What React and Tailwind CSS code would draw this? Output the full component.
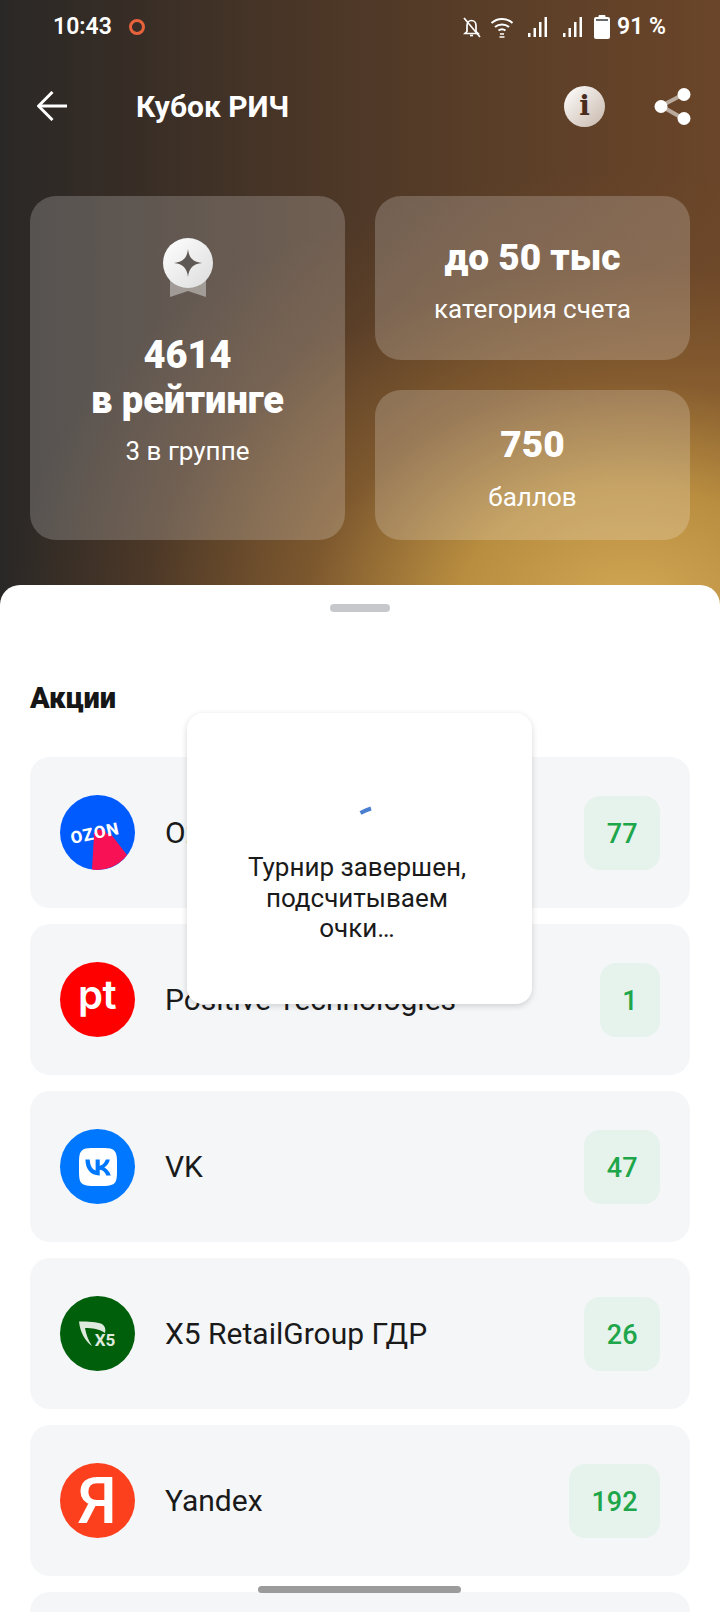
import React from "react";
import { SiVk } from "react-icons/si";

const stocks = [
  { name: "Ozon", score: 77, logo: "ozon" },
  { name: "Positive Technologies", score: 1, logo: "pt" },
  { name: "VK", score: 47, logo: "vk" },
  { name: "X5 RetailGroup ГДР", score: 26, logo: "x5" },
  { name: "Yandex", score: 192, logo: "yandex" },
];

const OzonLogo = () => (
  <svg viewBox="0 0 75 75" className="w-[75px] h-[75px]">
    <circle cx="37.5" cy="37.5" r="37.5" fill="#005bff" />
    <path d="M34 41 L50 38 L67 60 A37.5 37.5 0 0 1 32 74.6 Z" fill="#f91155" />
    <ellipse cx="40" cy="39" rx="6.5" ry="4.5" fill="#f91155" transform="rotate(-12 40 39)" />
    <text x="35" y="44" textAnchor="middle" fontSize="17" fontWeight="800" fill="#fff" letterSpacing="1" transform="rotate(-12 35 38)" fontFamily="Roboto, sans-serif">
      OZON
    </text>
  </svg>
);

const PtLogo = () => (
  <svg viewBox="0 0 75 75" className="w-[75px] h-[75px]">
    <circle cx="37.5" cy="37.5" r="37.5" fill="#ff0000" />
    <text x="37" y="47" textAnchor="middle" fontSize="40" fontWeight="600" fill="#fff" letterSpacing="-0.5" fontFamily="Inter, sans-serif">
      pt
    </text>
  </svg>
);

const VkLogo = () => (
  <div className="w-[75px] h-[75px] rounded-full bg-[#0077ff] flex items-center justify-center">
    <SiVk size={38} color="#ffffff" />
  </div>
);

const X5Logo = () => (
  <svg viewBox="0 0 75 75" className="w-[75px] h-[75px]">
    <circle cx="37.5" cy="37.5" r="37.5" fill="#005f0b" />
    <path d="M19 25.5 C28 25.5 37 26 42 28 C45 30 46 33 45 37 C40 33 32 32 25 32 C26 38 28 44 32 50 C25 45 20 36 19 25.5 Z" fill="#dfeadf" />
    <text x="45" y="50" textAnchor="middle" fontSize="17" fontWeight="700" fill="#dfeadf" fontFamily="Roboto, sans-serif">
      X5
    </text>
  </svg>
);

const YandexLogo = () => (
  <svg viewBox="0 0 75 75" className="w-[75px] h-[75px]">
    <circle cx="37.5" cy="37.5" r="37.5" fill="#fc3f1d" />
    <text x="37" y="60" textAnchor="middle" fontSize="64" fontWeight="500" fill="#fff" fontFamily="Roboto, sans-serif">
      Я
    </text>
  </svg>
);

const logos = { ozon: OzonLogo, pt: PtLogo, vk: VkLogo, x5: X5Logo, yandex: YandexLogo };

const StockRow = ({ stock }) => {
  const Logo = logos[stock.logo];
  return (
    <div className="h-[151px] rounded-[20px] bg-[#f4f6f8] pl-[30px] pr-[30px] flex items-center">
      <Logo />
      <span className="ml-[30px] flex-1 text-[30px] leading-[38px] text-[#1a1a1a]">{stock.name}</span>
      <span className="h-[74px] px-[22.5px] pt-[3px] rounded-[16px] bg-[#e6f2ec] flex items-center text-[27px] font-medium text-[#1ea64a]">
        {stock.score}
      </span>
    </div>
  );
};

const StatusIcons = () => (
  <div className="flex items-center">
    <svg viewBox="0 0 22 22" className="w-[22px] h-[22px]" fill="none" stroke="#fff" strokeWidth="1.7">
      <path d="M6 15.5V9.5C6 6.5 8 4.5 10.5 4.5S15 6.5 15 9.5V15.5L17 17.5H4Z" />
      <path d="M9 19.5H12" />
      <path d="M3 2L19 21" />
    </svg>
    <svg viewBox="0 0 24 22" className="ml-[7px] w-[24px] h-[22px]" fill="none" stroke="#fff" strokeWidth="2">
      <path d="M1.5 7C7.5 1.5 16.5 1.5 22.5 7" />
      <path d="M5 11C9 7.5 15 7.5 19 11" />
      <path d="M8.5 14.5C10.5 13 13.5 13 15.5 14.5" />
      <path d="M10 18H14M9.5 21H14.5" strokeWidth="1.5" />
    </svg>
    <svg viewBox="0 0 20 22" className="ml-[14px] w-[20px] h-[22px]" fill="#fff">
      <rect x="0" y="17" width="2.5" height="4" />
      <rect x="5.5" y="12" width="2.5" height="9" />
      <rect x="11" y="6" width="2.5" height="15" />
      <rect x="16.5" y="1" width="2.5" height="20" />
    </svg>
    <svg viewBox="0 0 20 22" className="ml-[15px] w-[20px] h-[22px]" fill="#fff">
      <rect x="0" y="17" width="2.5" height="4" />
      <rect x="5.5" y="12" width="2.5" height="9" />
      <rect x="11" y="6" width="2.5" height="15" />
      <rect x="16.5" y="1" width="2.5" height="20" />
    </svg>
    <svg viewBox="0 0 16 24" className="ml-[11px] w-[16px] h-[24px]" fill="#fff">
      <rect x="4.5" y="0" width="7" height="3" rx="1" />
      <path d="M2 2H14A2 2 0 0 1 16 4V22A2 2 0 0 1 14 24H2A2 2 0 0 1 0 22V4A2 2 0 0 1 2 2Z" />
      <rect x="2" y="4" width="12" height="2" fill="#6b6b6b" />
    </svg>
    <span className="ml-[7px] text-[23px] font-semibold text-white">91 %</span>
  </div>
);

export default function App() {
  return (
    <div className="relative w-[720px] h-[1612px] overflow-hidden bg-white font-['Roboto',sans-serif]">
      <div className="h-[605px] bg-[radial-gradient(ellipse_620px_440px_at_630px_610px,rgba(210,167,84,1)_0%,rgba(192,148,66,0.92)_28%,rgba(150,105,50,0.66)_52%,rgba(120,80,42,0.3)_78%,rgba(110,70,40,0)_100%),linear-gradient(90deg,#2a2826_0%,#352c26_15%,#4a3627_42%,#5c3f28_72%,#6a4529_100%)]">
        <div className="h-[54px] pl-[53px] pr-[54px] flex items-center justify-between">
          <div className="flex items-center">
            <span className="text-[23px] font-semibold text-white">10:43</span>
            <span className="ml-[17px] w-[16px] h-[16px] rounded-full border-[3px] border-[#e8633c]" />
          </div>
          <StatusIcons />
        </div>

        <div className="h-[104px] pl-[37px] pr-[29px] flex items-center">
          <svg viewBox="0 0 30 30" className="w-[30px] h-[30px]" fill="none" stroke="#fff" strokeWidth="3">
            <path d="M30 15H2" />
            <path d="M15.5 1L1.5 15L15.5 29" />
          </svg>
          <span className="ml-[69px] flex-1 text-[30px] font-bold text-white">Кубок РИЧ</span>
          <div className="w-[41px] h-[41px] rounded-full bg-gradient-to-br from-[#ffffff] to-[#c8b8ac] flex items-center justify-center">
            <span className="text-[28px] font-bold text-[#4a2c1c] font-['DejaVu_Serif',serif]">i</span>
          </div>
          <svg viewBox="0 0 37 37" className="ml-[49px] w-[37px] h-[37px]">
            <path d="M30 6L7 18L30 31" fill="none" stroke="#fff" strokeOpacity="0.55" strokeWidth="4" />
            <circle cx="30" cy="6.5" r="6.5" fill="#fff" />
            <circle cx="7" cy="18.5" r="6.5" fill="#fff" />
            <circle cx="30" cy="30.5" r="6.5" fill="#fff" />
          </svg>
        </div>

        <div className="mt-[38px] px-[30px] grid grid-cols-2 grid-rows-[164px_150px] gap-[30px] text-white text-center">
          <div className="row-span-2 rounded-[26px] bg-white/20 pt-[42px] flex flex-col items-center">
            <svg viewBox="0 0 50 59" className="w-[50px] h-[59px]">
              <path d="M7 40H43V59L25 53L7 59Z" fill="#fff" fillOpacity="0.4" />
              <defs>
                <linearGradient id="medal" x1="0" y1="0" x2="1" y2="1">
                  <stop offset="0" stopColor="#ffffff" />
                  <stop offset="1" stopColor="#dcdcdc" />
                </linearGradient>
              </defs>
              <circle cx="25" cy="25" r="25" fill="url(#medal)" />
              <path d="M25 11C26 20 30 24 39 25C30 26 26 30 25 39C24 30 20 26 11 25C20 24 24 20 25 11Z" fill="#5d5854" />
            </svg>
            <div className="mt-[36px] text-[38px] leading-[45px] font-black">
              4614
              <br />в рейтинге
            </div>
            <div className="mt-[13px] text-[26px] leading-[30px]">3 в группе</div>
          </div>
          <div className="rounded-[26px] bg-white/20 pt-[40px]">
            <div className="text-[37px] leading-[44px] font-black">до 50 тыс</div>
            <div className="mt-[14px] text-[26px] leading-[30px]">категория счета</div>
          </div>
          <div className="rounded-[26px] bg-white/20 pt-[33px]">
            <div className="text-[37px] leading-[44px] font-black">750</div>
            <div className="mt-[15px] text-[26px] leading-[30px]">баллов</div>
          </div>
        </div>
      </div>

      <div className="-mt-[20px] relative rounded-t-[20px] bg-white px-[30px] pt-[19px]">
        <div className="mx-auto w-[60px] h-[8px] rounded-full bg-[#c6c8cb]" />
        <h2 className="mt-[66px] text-[29px] leading-[40px] font-black text-[#161616]">Акции</h2>
        <div className="mt-[39px] flex flex-col gap-[16px]">
          {stocks.map((stock) => (
            <StockRow key={stock.name} stock={stock} />
          ))}
          <div className="h-[151px] rounded-[20px] bg-[#f4f6f8]" />
        </div>
      </div>

      <div className="absolute left-[187px] top-[713px] w-[345px] h-[291px] rounded-[16px] bg-white shadow-[0_2px_6px_rgba(0,0,0,0.16)] pt-[91px] pl-[50px] pr-[55px] text-center">
        <svg viewBox="0 0 48 48" className="ml-[98px] w-[48px] h-[48px]" fill="none" stroke="#4a7fd0" strokeWidth="4">
          <path d="M25.5 9Q31 6 36 4.5" />
        </svg>
        <p className="text-[26px] leading-[30.5px] text-[#1a1a1a]">Турнир завершен, подсчитываем очки…</p>
      </div>

      <div className="absolute left-[258px] top-[1586px] w-[203px] h-[7px] rounded-full bg-[#9b9b9b]" />
    </div>
  );
}
